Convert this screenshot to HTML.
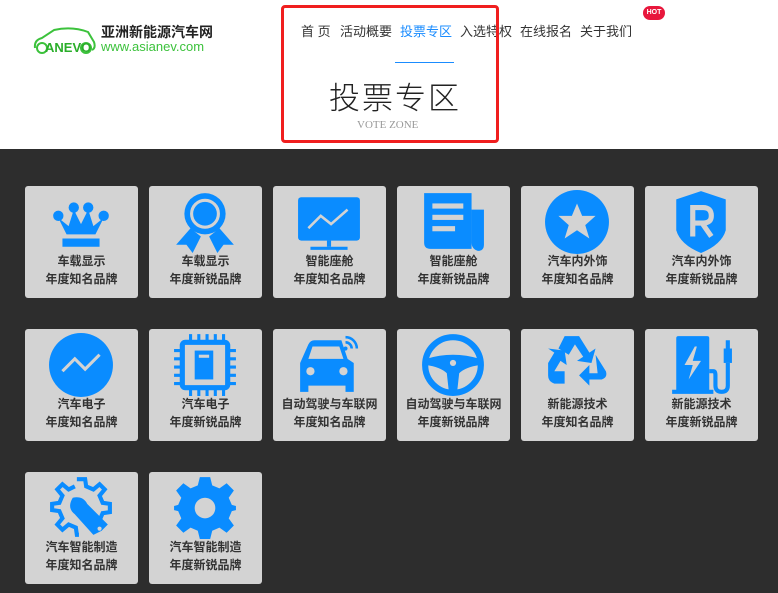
<!DOCTYPE html><html><head><meta charset="utf-8"><style>
*{margin:0;padding:0;box-sizing:border-box}
body{width:778px;height:593px;overflow:hidden;background:#fff;font-family:"Liberation Sans","Noto Sans CJK SC",sans-serif;position:relative}
.hd{position:absolute;left:0;top:0;width:778px;height:149px;background:#fff}
.nav{position:absolute;top:21px;font-size:13px;color:#333}
.nav span{position:absolute;white-space:nowrap}
.box{position:absolute;left:281px;top:5px;width:218px;height:138px;border:3px solid #f01e1e;border-radius:4px}
.dark{position:absolute;left:0;top:149px;width:778px;height:444px;background:#2d2d2d}
.c{position:absolute;width:113px;height:112px;background:#d3d3d3;border-radius:3px}
.c svg{position:absolute;left:23px;top:3px;width:66px;height:66px}
.c p{position:absolute;left:0;width:113px;text-align:center;font-size:12px;font-weight:bold;color:#333;line-height:18px}
</style></head><body>
<div class="hd">
<svg style="position:absolute;left:32px;top:26px" width="66" height="30" viewBox="0 0 66 30"><path d="M3 22 Q2 14 10 12 L22 4 Q40 0 56 6 L62 16 Q64 22 60 24" fill="none" stroke="#3cc23c" stroke-width="2"/><circle cx="10" cy="22" r="5" fill="none" stroke="#3cc23c" stroke-width="2"/><circle cx="54" cy="22" r="5" fill="none" stroke="#3cc23c" stroke-width="2"/><text x="13" y="26" font-size="13" font-weight="bold" fill="#2aae2a" font-family="Liberation Sans">ANEVO</text></svg>
<div style="position:absolute;left:101px;top:24px;font-size:14px;font-weight:bold;color:#222;line-height:16px">亚洲新能源汽车网</div>
<div style="position:absolute;left:101px;top:40px;font-size:13px;color:#3cc23c;line-height:13px">www.asianev.com</div>
<div class="nav"><span style="left:301px">首 页</span><span style="left:340px">活动概要</span><span style="left:400px;color:#1a8cff">投票专区</span><span style="left:460px">入选特权</span><span style="left:520px">在线报名</span><span style="left:580px">关于我们</span></div>
<div style="position:absolute;left:643px;top:6px;width:22px;height:14px;background:#e8173c;border-radius:7px;color:#fff;font-size:7px;font-weight:bold;text-align:center;line-height:14px">HOT</div>
<div style="position:absolute;left:395px;top:62px;width:59px;height:1px;background:#1a8cff"></div>
<div style="position:absolute;left:329px;top:73px;font-size:31px;color:#222;letter-spacing:2px;font-weight:300">投票专区</div>
<div style="position:absolute;left:357px;top:119px;font-size:11px;color:#999;font-family:'Liberation Serif',serif">VOTE ZONE</div>
<div class="box"></div>
</div>
<div class="dark"></div>

<div class="c" style="left:25px;top:186px"><svg viewBox="0 0 64 64" fill="#0a8cff"><circle cx="10" cy="26" r="5"/><circle cx="25" cy="18" r="5"/><circle cx="39" cy="18" r="5"/><circle cx="54" cy="26" r="5"/><path d="M10 28 L18 44 L46 44 L54 28 L44 36 L39 20 L32 34 L25 20 L20 36Z"/><rect x="14" y="48" width="36" height="8"/></svg><p style="top:66px">车载显示<br>年度知名品牌</p></div>
<div class="c" style="left:149px;top:186px"><svg viewBox="0 0 64 64" fill="#0a8cff"><path d="M18 38 L4 54 L14 54 L20 62 L28 46Z M46 38 L60 54 L50 54 L44 62 L36 46Z"/><circle cx="32" cy="24" r="20"/><circle cx="32" cy="24" r="13" fill="none" stroke="#d3d3d3" stroke-width="3"/></svg><p style="top:66px">车载显示<br>年度新锐品牌</p></div>
<div class="c" style="left:273px;top:186px"><svg viewBox="0 0 64 64" fill="#0a8cff"><rect x="2" y="8" width="60" height="42" rx="3"/><rect x="30" y="50" width="4" height="6"/><rect x="14" y="56" width="36" height="3"/><path d="M12 38 L24 26 L34 34 L50 20" fill="none" stroke="#d3d3d3" stroke-width="2.5"/></svg><p style="top:66px">智能座舱<br>年度知名品牌</p></div>
<div class="c" style="left:397px;top:186px"><svg viewBox="0 0 64 64" fill="#0a8cff"><path d="M4 4 L50 4 L50 58 L10 58 Q4 58 4 52Z"/><path d="M50 20 L62 20 L62 54 Q62 60 56 60 Q50 58 50 52Z"/><rect x="12" y="14" width="30" height="5" fill="#d3d3d3"/><rect x="12" y="25" width="30" height="5" fill="#d3d3d3"/><rect x="12" y="36" width="22" height="5" fill="#d3d3d3"/></svg><p style="top:66px">智能座舱<br>年度新锐品牌</p></div>
<div class="c" style="left:521px;top:186px"><svg viewBox="0 0 64 64" fill="#0a8cff"><circle cx="32" cy="32" r="31"/><path fill="#d3d3d3" d="M32 14 L37 26 L50 26 L40 35 L44 48 L32 40 L20 48 L24 35 L14 26 L27 26Z"/></svg><p style="top:66px">汽车内外饰<br>年度知名品牌</p></div>
<div class="c" style="left:645px;top:186px"><svg viewBox="0 0 64 64" fill="#0a8cff"><path d="M32 2 L56 10 L56 40 Q52 54 32 62 Q12 54 8 40 L8 10Z"/><path d="M24 46 L24 18 L34 18 Q42 18 42 26 Q42 33 34 33 L26 33 M33 33 L42 46" fill="none" stroke="#d3d3d3" stroke-width="5"/></svg><p style="top:66px">汽车内外饰<br>年度新锐品牌</p></div>

<div class="c" style="left:25px;top:329px"><svg viewBox="0 0 64 64" fill="#0a8cff"><circle cx="32" cy="32" r="31"/><path d="M14 38 L26 26 L36 36 L50 22" fill="none" stroke="#d3d3d3" stroke-width="3"/></svg><p style="top:66px">汽车电子<br>年度知名品牌</p></div>
<div class="c" style="left:149px;top:329px"><svg viewBox="0 0 64 64" fill="#0a8cff"><rect x="10" y="10" width="44" height="44" rx="3" fill="none" stroke="#0a8cff" stroke-width="5"/><rect x="22" y="18" width="18" height="28"/><rect x="26" y="22" width="10" height="3" fill="#d3d3d3"/><g stroke="#0a8cff" stroke-width="3"><path d="M18 2v8M26 2v8M34 2v8M42 2v8M50 2v8M18 54v8M26 54v8M34 54v8M42 54v8M50 54v8M2 18h8M2 26h8M2 34h8M2 42h8M2 50h8M54 18h8M54 26h8M54 34h8M54 42h8M54 50h8"/></g></svg><p style="top:66px">汽车电子<br>年度新锐品牌</p></div>
<div class="c" style="left:273px;top:329px"><svg viewBox="0 0 64 64" fill="#0a8cff"><path d="M4 30 L12 12 Q14 8 18 8 L44 8 L50 26 L56 30 L56 58 L48 58 L48 52 L12 52 L12 58 L4 58Z"/><path d="M12 26 L16 14 L42 14 L46 26Z" fill="#d3d3d3"/><circle cx="14" cy="38" r="4" fill="#d3d3d3"/><circle cx="46" cy="38" r="4" fill="#d3d3d3"/><circle cx="48" cy="16" r="2"/><path d="M48 10 A6 6 0 0 1 54 16 M48 5 A11 11 0 0 1 59 16" fill="none" stroke="#0a8cff" stroke-width="2.5"/></svg><p style="top:66px">自动驾驶与车联网<br>年度知名品牌</p></div>
<div class="c" style="left:397px;top:329px"><svg viewBox="0 0 64 64" fill="#0a8cff"><circle cx="32" cy="32" r="27" fill="none" stroke="#0a8cff" stroke-width="6"/><path d="M6 26 Q32 18 58 26 L58 32 Q44 34 38 40 L36 58 L28 58 L26 40 Q20 34 6 32Z"/><circle cx="32" cy="30" r="3" fill="#d3d3d3"/></svg><p style="top:66px">自动驾驶与车联网<br>年度新锐品牌</p></div>
<div class="c" style="left:521px;top:329px"><svg viewBox="0 0 64 64" fill="#0a8cff"><path d="M20 4 L34 4 L44 20 L50 16 L46 30 L32 28 L38 24 L30 12 L24 22 L14 16Z"/><path d="M50 22 L60 38 Q62 44 56 46 L44 46 L44 40 L52 40 Z M44 46 L44 52 L34 42 L44 32 L44 38Z"/><path d="M4 30 L10 20 L4 16 L20 18 L22 32 L16 28 L10 38 L20 38 L20 50 L10 50 Q4 48 4 42Z"/></svg><p style="top:66px">新能源技术<br>年度知名品牌</p></div>
<div class="c" style="left:645px;top:329px"><svg viewBox="0 0 64 64" fill="#0a8cff"><path d="M8 6 Q8 4 10 4 L38 4 Q40 4 40 6 L40 58 L8 58Z"/><rect x="4" y="56" width="40" height="4"/><path d="M26 14 L16 32 L24 32 L20 46 L32 28 L24 28 L28 14Z" fill="#d3d3d3"/><path d="M40 38 L44 38 Q46 38 46 42 L46 52 Q46 58 52 58 Q58 58 58 52 L58 30" fill="none" stroke="#0a8cff" stroke-width="4"/><rect x="54" y="16" width="8" height="14"/><rect x="56" y="8" width="4" height="8"/></svg><p style="top:66px">新能源技术<br>年度新锐品牌</p></div>

<div class="c" style="left:25px;top:472px"><svg viewBox="0 0 64 64" fill="none" stroke="#0a8cff" stroke-width="4"><path d="M28 4 L36 4 L37 11 L44 14 L50 9 L55 14 L50 20 L53 27 L60 28 L60 36 L53 37 L50 44"/><path d="M30 58 L28 58 L27 51 L20 48 L14 53 L9 48 L14 42 L11 35 L4 34 L4 28 L11 27 L14 20 L9 14 L14 9 L20 14 L26 11"/><path d="M24 22 Q18 32 26 38 L44 58 L52 54 L58 48 L38 28 Q34 20 24 22Z" fill="#0a8cff" stroke="none"/><circle cx="50" cy="52" r="2" fill="#d3d3d3" stroke="none"/></svg><p style="top:66px">汽车智能制造<br>年度知名品牌</p></div>
<div class="c" style="left:149px;top:472px"><svg viewBox="0 0 64 64" fill="#0a8cff"><path d="M27 2 L37 2 L39 10 L46 13 L53 8 L60 15 L55 22 L58 29 L62 30 L62 34 L58 35 L55 42 L60 49 L53 56 L46 51 L39 54 L37 62 L27 62 L25 54 L18 51 L11 56 L4 49 L9 42 L6 35 L2 34 L2 30 L6 29 L9 22 L4 15 L11 8 L18 13 L25 10Z"/><circle cx="32" cy="32" r="10" fill="#d3d3d3"/></svg><p style="top:66px">汽车智能制造<br>年度新锐品牌</p></div>
</body></html>
